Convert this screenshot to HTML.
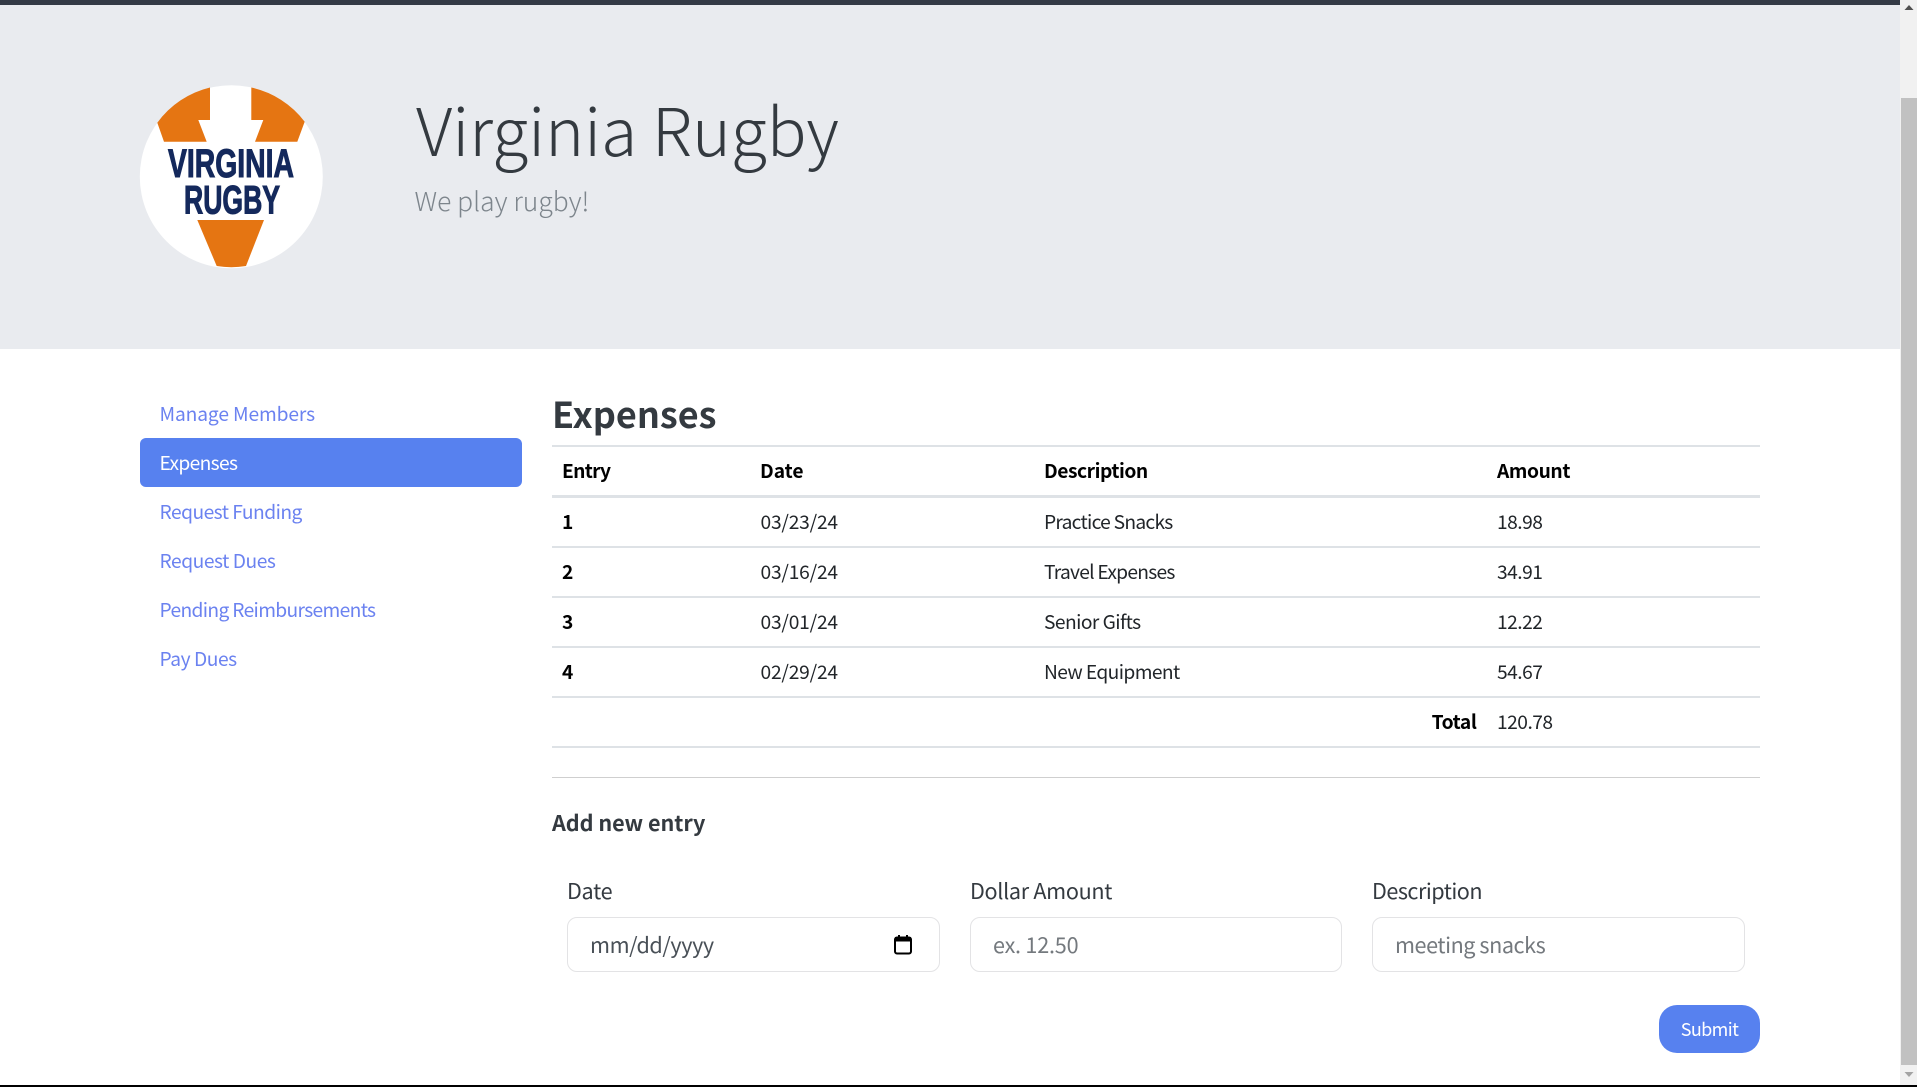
<!DOCTYPE html>
<html lang="en"><head><meta charset="utf-8"><title>Virginia Rugby</title>
<style>
html,body{margin:0;padding:0;width:1917px;height:1087px;overflow:hidden;background:#fff}
body{position:relative;font-family:"Noto Sans CJK JP","Liberation Sans",sans-serif;font-size:19.2px;color:#212529}
div{position:absolute}
.t{line-height:0;white-space:nowrap;height:0}
.b{font-weight:700;color:#000}
.n{color:#6b82f0}
.l{background:#dee2e6;left:552px;width:1208px;height:1.5px}
.i{top:917px;height:53px;background:#fff;border:1.5px solid #e3e3e5;border-radius:10px}
.p{color:#74797e;font-size:21.6px}
.f{font-size:21.6px;color:#343a40}
.d{letter-spacing:-.2px}
.m{letter-spacing:-.5px}
</style></head><body>
<div style="left:0;top:0;width:1900px;height:349px;background:#e9ebef"></div>
<div style="left:0;top:0;width:1900px;height:5px;background:#343a46"></div>

<svg style="position:absolute;left:0;top:0" width="400" height="300" viewBox="0 0 400 300">
<circle cx="231.3" cy="176.7" r="91.5" fill="#fff"/>
<path d="M210 87.5V120H198.3L206.7 141.7H164L157.3 122.7A91.5 91.5 0 0 1 210 87.5Z" fill="#e57512"/>
<path d="M251.3 87.5V120H263.3L255 141.7H297.3L304.7 121.7A91.5 91.5 0 0 0 251.3 87.5Z" fill="#e57512"/>
<path d="M197.3 220H264L246 266A91.5 91.5 0 0 1 216.7 266Z" fill="#e57512"/>
<text x="168" y="177" font-family="Liberation Sans" font-weight="700" font-size="40" textLength="126" lengthAdjust="spacingAndGlyphs" fill="#14295c" stroke="#14295c" stroke-width="1.1">VIRGINIA</text>
<text x="184" y="213.7" font-family="Liberation Sans" font-weight="700" font-size="40" textLength="96" lengthAdjust="spacingAndGlyphs" fill="#14295c" stroke="#14295c" stroke-width="1.1">RUGBY</text>
</svg>

<div class="t" style="left:416px;top:128px;font-size:66px;font-weight:300;color:#343a40">Virginia Rugby</div>
<div class="t" style="left:414.5px;top:199.5px;font-size:26.4px;font-weight:300;color:#7d858c">We play rugby!</div>

<div style="left:140px;top:438px;width:382px;height:49px;background:#5781ef;border-radius:6px"></div>
<div class="t n" style="left:159.5px;top:413px;letter-spacing:-.12px">Manage Members</div>
<div class="t" style="left:159.5px;top:462px;color:#fff;letter-spacing:-.65px">Expenses</div>
<div class="t n" style="left:159.5px;top:511px;letter-spacing:-.52px">Request Funding</div>
<div class="t n" style="left:159.5px;top:560px;letter-spacing:-.45px">Request Dues</div>
<div class="t n" style="left:159.5px;top:609px;letter-spacing:-.65px">Pending Reimbursements</div>
<div class="t n" style="left:159.5px;top:658px;letter-spacing:-.45px">Pay Dues</div>

<div class="t" style="left:552px;top:412.5px;font-size:36px;font-weight:700;color:#343a40">Expenses</div>

<div class="l" style="top:445px"></div>
<div class="l" style="top:495px;height:2.5px"></div>
<div class="l" style="top:546px"></div>
<div class="l" style="top:596px"></div>
<div class="l" style="top:646px"></div>
<div class="l" style="top:696px"></div>
<div class="l" style="top:746px"></div>
<div class="l" style="top:776.5px;background:#cfcfcf"></div>

<div class="t b" style="left:562px;top:470px;letter-spacing:-.7px">Entry</div>
<div class="t b" style="left:760px;top:470px">Date</div>
<div class="t b" style="left:1044px;top:470px;letter-spacing:-.45px">Description</div>
<div class="t b" style="left:1497px;top:470px;letter-spacing:-.4px">Amount</div>

<div class="t b" style="left:562px;top:521px">1</div>
<div class="t d" style="left:760.5px;top:521px">03/23/24</div>
<div class="t" style="left:1044px;top:521px;letter-spacing:-.73px">Practice Snacks</div>
<div class="t m" style="left:1497px;top:521px">18.98</div>

<div class="t b" style="left:562px;top:571px">2</div>
<div class="t d" style="left:760.5px;top:571px">03/16/24</div>
<div class="t" style="left:1044px;top:571px;letter-spacing:-.73px">Travel Expenses</div>
<div class="t m" style="left:1497px;top:571px">34.91</div>

<div class="t b" style="left:562px;top:621px">3</div>
<div class="t d" style="left:760.5px;top:621px">03/01/24</div>
<div class="t" style="left:1044px;top:621px;letter-spacing:-.55px">Senior Gifts</div>
<div class="t m" style="left:1497px;top:621px">12.22</div>

<div class="t b" style="left:562px;top:671px">4</div>
<div class="t d" style="left:760.5px;top:671px">02/29/24</div>
<div class="t" style="left:1044px;top:671px;letter-spacing:-.6px">New Equipment</div>
<div class="t m" style="left:1497px;top:671px">54.67</div>

<div class="t b" style="right:440.5px;top:721px;letter-spacing:-.4px">Total</div>
<div class="t m" style="left:1497px;top:721px">120.78</div>

<div class="t" style="left:552px;top:822.5px;font-size:21.6px;font-weight:700;color:#343a40;letter-spacing:-.05px">Add new entry</div>

<div class="t f" style="left:567px;top:891px;letter-spacing:-.3px">Date</div>
<div class="t f" style="left:970px;top:891px;letter-spacing:-.32px">Dollar Amount</div>
<div class="t f" style="left:1372px;top:891px;letter-spacing:-.5px">Description</div>

<div class="i" style="left:567px;width:371px"></div>
<div class="i" style="left:970px;width:370px"></div>
<div class="i" style="left:1372px;width:371px"></div>

<div class="t" style="left:590px;top:945px;font-size:21.6px;color:#495057;letter-spacing:-.42px">mm/dd/yyyy</div>
<div class="t p" style="left:993px;top:945px;letter-spacing:-.2px">ex. 12.50</div>
<div class="t p" style="left:1395px;top:945px;letter-spacing:-.44px">meeting snacks</div>

<svg style="position:absolute;left:893px;top:934px" width="20" height="21" viewBox="0 0 20 21">
<rect x="2" y="3.5" width="16" height="16" rx="2" fill="none" stroke="#000" stroke-width="2"/>
<rect x="2" y="3" width="16" height="4.5" fill="#000"/>
<rect x="5" y="1" width="2" height="3" fill="#000"/>
<rect x="13" y="1" width="2" height="3" fill="#000"/>
</svg>

<div style="left:1659px;top:1005px;width:101px;height:48px;background:#5781ef;border-radius:18px"></div>
<div class="t" style="left:1659px;width:101px;text-align:center;top:1029px;color:#fff;font-size:18px;letter-spacing:-.6px">Submit</div>

<div style="left:1900px;top:0;width:17px;height:1087px;background:#f1f1f1"></div>
<div style="left:1901px;top:98px;width:16px;height:967px;background:#c1c1c1"></div>
<svg style="position:absolute;left:1900px;top:0" width="17" height="14"><path d="M9 5L13.5 10H4.5Z" fill="#505050"/></svg>
<svg style="position:absolute;left:1900px;top:1068px" width="17" height="14"><path d="M4.5 4H13.5L9 9Z" fill="#a3a3a3"/></svg>
<div style="left:0;top:1085px;width:1917px;height:2px;background:#000"></div>
</body></html>
